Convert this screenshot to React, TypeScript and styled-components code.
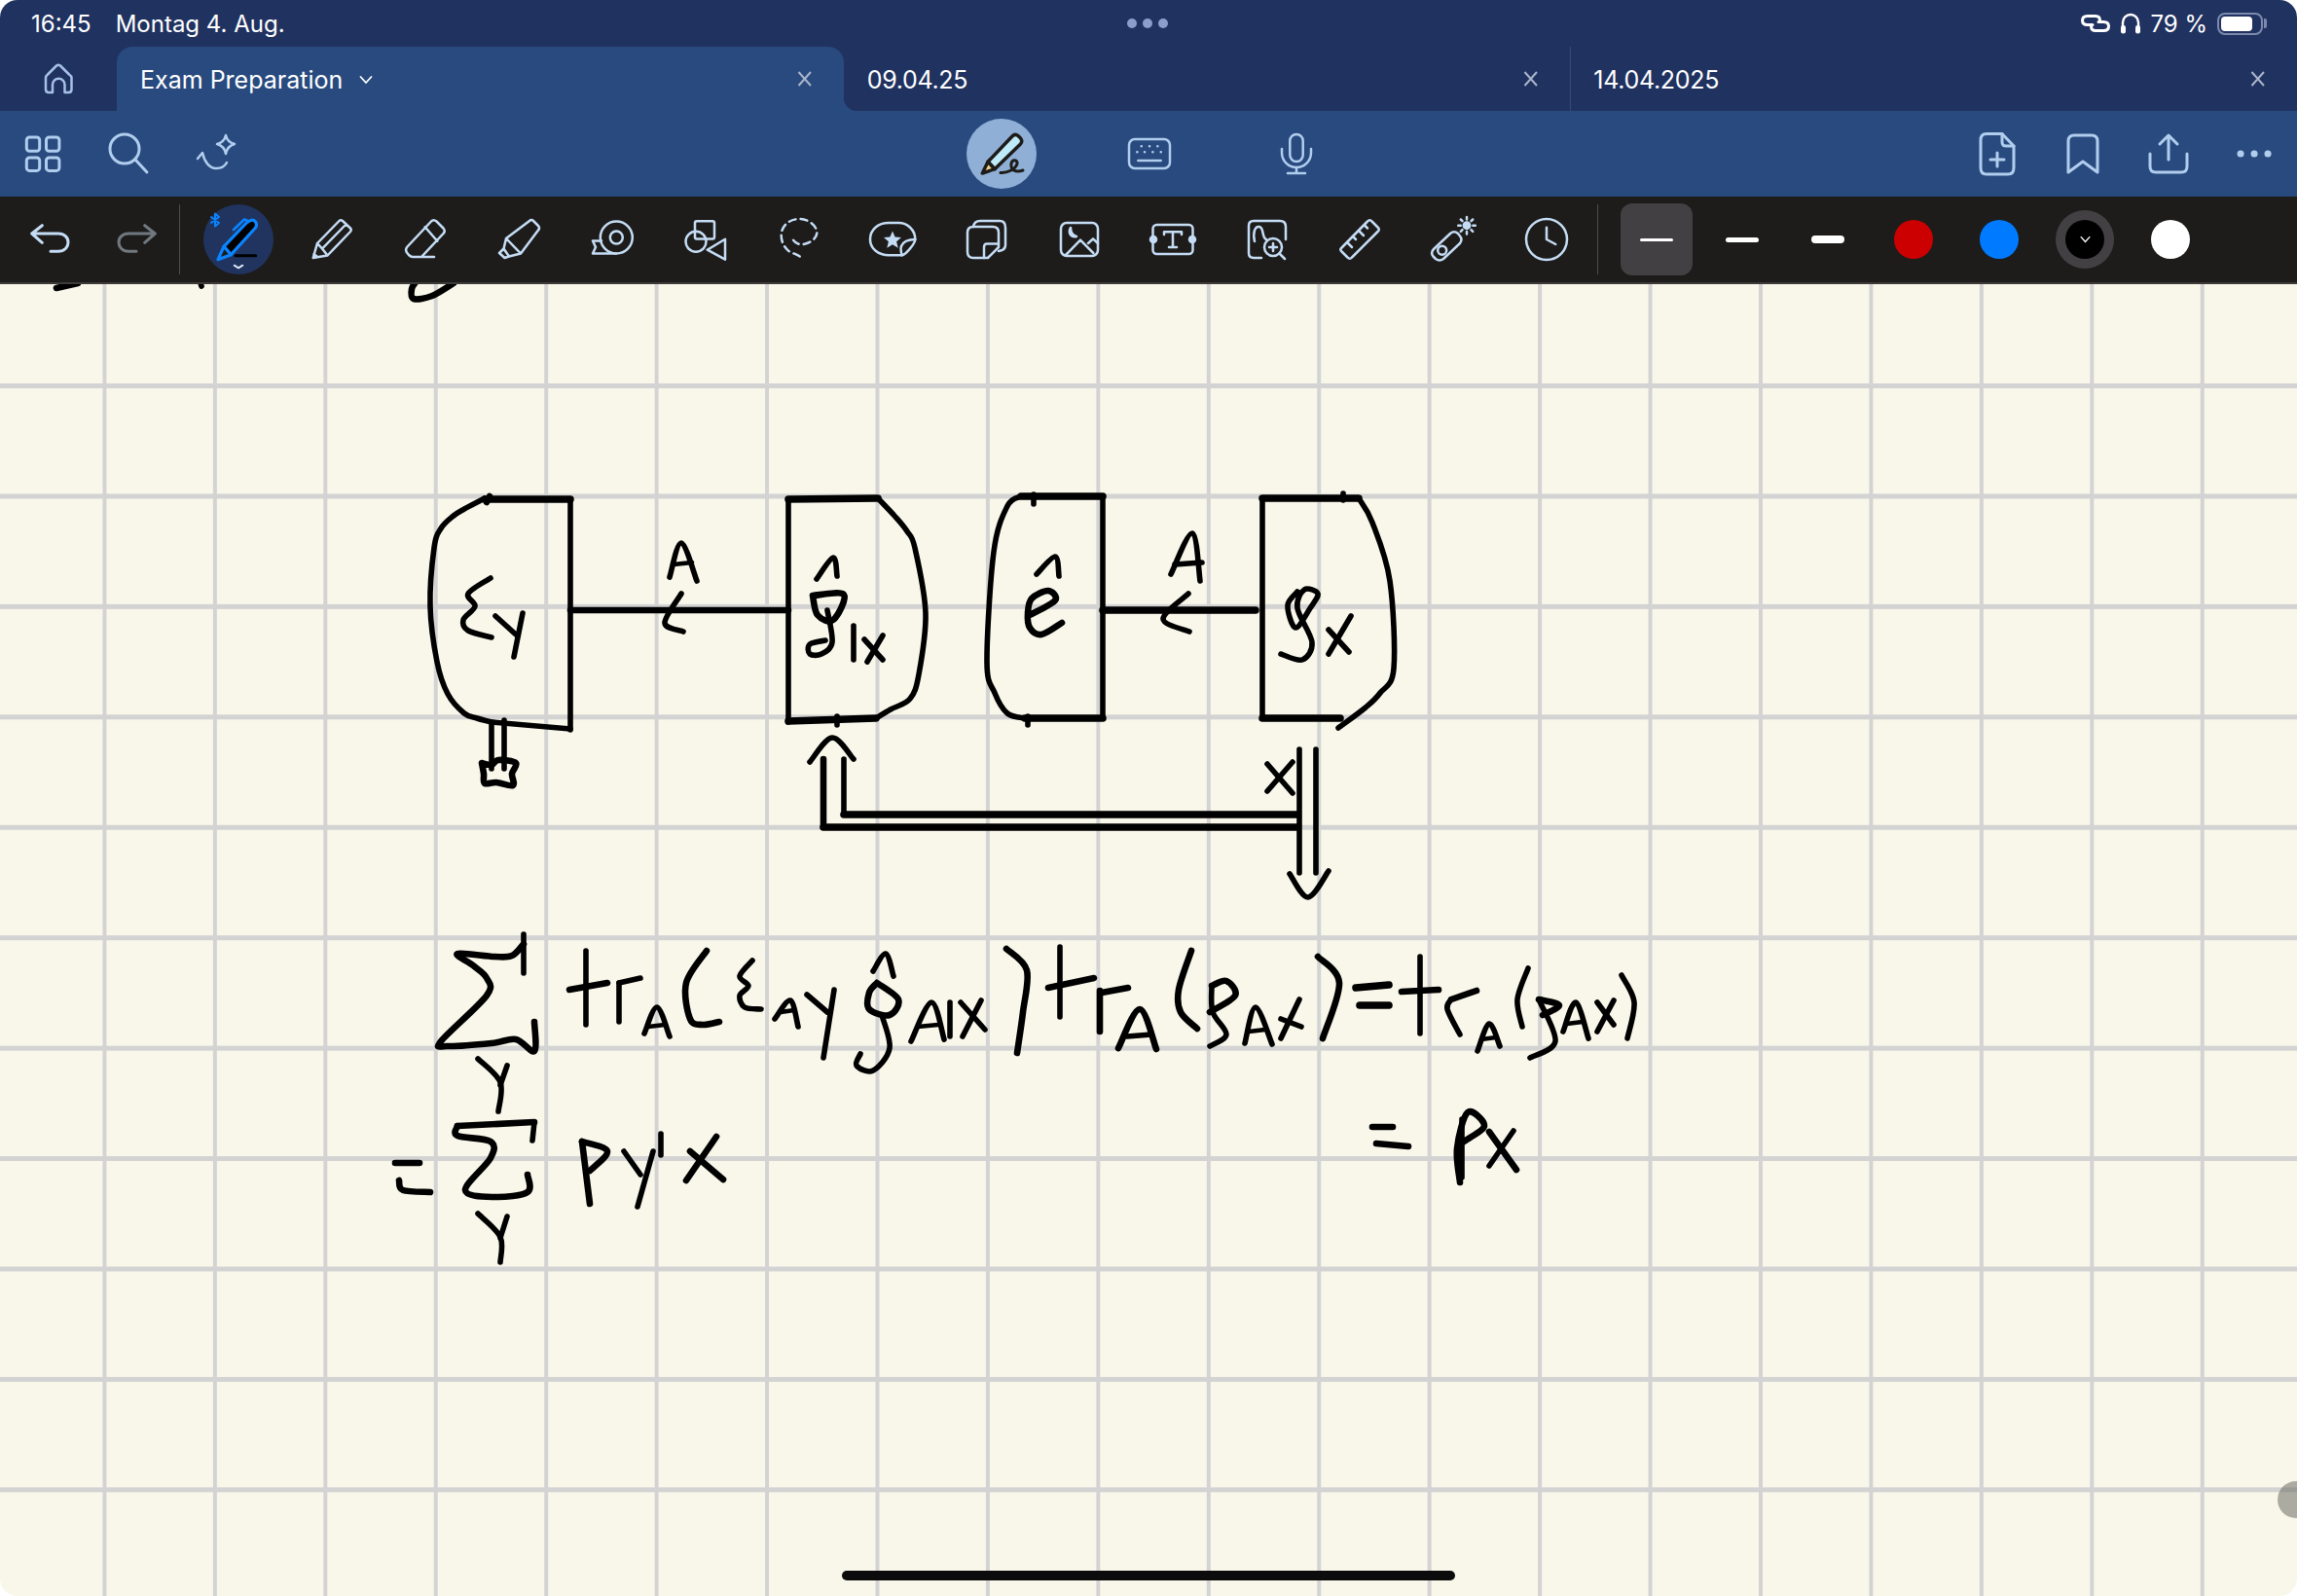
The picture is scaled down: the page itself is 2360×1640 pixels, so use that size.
import React from 'react';
import styled, { createGlobalStyle } from 'styled-components';

const GlobalStyle = createGlobalStyle`
  html, body {
    margin: 0;
    padding: 0;
    background: #fff;
    font-family: Inter, "Liberation Sans", sans-serif;
  }
`;

const Screen = styled.div`
  position: relative;
  display: flex;
  flex-direction: column;
  width: 2360px;
  height: 1640px;
  overflow: hidden;
  border-radius: 18px;
`;

const StatusBar = styled.div`
  display: flex;
  align-items: center;
  justify-content: space-between;
  height: 48px;
  padding: 0 35px 0 32px;
  background: #203260;
  color: #fff;
  font-size: 24px;
`;

const StatusGroup = styled.div`
  display: flex;
  align-items: center;
  flex: 1;
  justify-content: ${(p: { $end?: boolean }) => (p.$end ? 'flex-end' : 'flex-start')};
`;

const DateText = styled.span`
  margin-left: 25px;
`;

const Dots = styled.div`
  display: flex;
  gap: 6px;
`;

const Dot = styled.span`
  width: 10px;
  height: 10px;
  border-radius: 50%;
  background: #8e9ecb;
`;

const Battery = styled.div`
  position: relative;
  box-sizing: border-box;
  width: 47px;
  height: 23px;
  margin-left: 10px;
  padding: 2px 1.5px;
  border: 2px solid #7b89ad;
  border-radius: 8px;

  &::before {
    content: '';
    display: block;
    width: 80%;
    height: 100%;
    background: #fff;
    border-radius: 4px;
  }

  &::after {
    content: '';
    position: absolute;
    top: 4.5px;
    right: -6px;
    width: 3px;
    height: 10px;
    background: #7b89ad;
    border-radius: 0 2px 2px 0;
  }
`;

const Percent = styled.span`
  margin-left: 9px;
`;

const StatusGap = styled.span`
  width: 7px;
`;

const TabRow = styled.div`
  display: flex;
  height: 66px;
  background: #203260;
`;

const HomeSlot = styled.div`
  display: flex;
  align-items: center;
  justify-content: center;
  width: 120px;
  color: #a6c1e6;
`;

const Tab = styled.div<{ $active?: boolean; $divider?: boolean }>`
  position: relative;
  display: flex;
  flex: 1;
  align-items: center;
  padding: 2px 30px 0 24px;
  color: #fff;
  font-size: 25px;
  background: ${(p) => (p.$active ? '#284a7e' : 'transparent')};
  border-radius: ${(p) => (p.$active ? '16px 16px 0 0' : '0')};
  box-shadow: ${(p) => (p.$divider ? 'inset 1px 0 0 #2f4d80' : 'none')};

  &::after {
    content: '';
    display: ${(p) => (p.$active ? 'block' : 'none')};
    position: absolute;
    right: -14px;
    bottom: 0;
    width: 14px;
    height: 14px;
    background: radial-gradient(circle at 100% 0, transparent 14px, #284a7e 14.5px);
  }
`;

const TabTitle = styled.span<{ $digits?: boolean }>`
  flex: 1;
  display: flex;
  align-items: center;
  gap: 16px;
  letter-spacing: ${(p) => (p.$digits ? '-0.3px' : '0')};
`;

const TabClose = styled.svg`
  width: 20px;
  height: 20px;
  margin-top: -2px;
  color: #aab4cb;
`;

const TopBar = styled.div`
  position: relative;
  display: flex;
  align-items: center;
  justify-content: space-between;
  height: 88px;
  background: #284a7e;
  color: #b1cdee;
`;

const BarGroup = styled.div`
  display: flex;
  align-items: center;
`;

const CenterGroup = styled(BarGroup)`
  position: absolute;
  left: 993px;
  top: 8px;
`;

const BarSlot = styled.div<{ $w?: number; $gap?: number }>`
  display: flex;
  align-items: center;
  justify-content: center;
  width: ${(p) => p.$w ?? 88}px;
  height: 72px;
  margin-left: ${(p) => p.$gap ?? 0}px;
`;

const InkButton = styled.div`
  display: flex;
  align-items: center;
  justify-content: center;
  width: 72px;
  height: 72px;
  border-radius: 50%;
  background: #8fafd6;
`;

const ToolBar = styled.div`
  display: flex;
  align-items: center;
  height: 88px;
  padding-left: 8px;
  background: #1d1c1a;
  border-bottom: 2px solid #3c3b39;
  color: #c5dcf5;
`;

const ToolSlot = styled.div<{ $w?: number; $muted?: boolean }>`
  display: flex;
  align-items: center;
  justify-content: center;
  flex: none;
  width: ${(p) => p.$w ?? 96}px;
  height: 72px;
  color: ${(p) => (p.$muted ? '#707880' : 'inherit')};
`;

const ToolDivider = styled.div<{ $l: number; $r: number }>`
  flex: none;
  width: 1px;
  height: 72px;
  margin: 0 ${(p) => p.$r}px 0 ${(p) => p.$l}px;
  background: #4d4d4c;
`;

const ActivePen = styled.div`
  display: flex;
  width: 72px;
  height: 72px;
  border-radius: 50%;
  background: #20345f;
`;

const WidthBox = styled.div<{ $selected?: boolean }>`
  display: flex;
  align-items: center;
  justify-content: center;
  width: 74px;
  height: 74px;
  border-radius: 12px;
  background: ${(p) => (p.$selected ? '#424043' : 'transparent')};
`;

const WidthLine = styled.span<{ $h: number }>`
  display: block;
  width: 34px;
  height: ${(p) => p.$h}px;
  border-radius: ${(p) => p.$h / 2}px;
  background: #fff;
`;

const Swatch = styled.span<{ $color: string }>`
  display: block;
  width: 40px;
  height: 40px;
  border-radius: 50%;
  background: ${(p) => p.$color};
`;

const SwatchRing = styled.div`
  display: flex;
  align-items: center;
  justify-content: center;
  width: 60px;
  height: 60px;
  border-radius: 50%;
  background: #424043;
`;

const BlackSwatch = styled(Swatch)`
  display: flex;
  align-items: center;
  justify-content: center;
  color: #fff;
`;

const Canvas = styled.div`
  position: relative;
  flex: 1;
  background-color: #f9f7ea;
  background-image: linear-gradient(to right, #d3d3d3 4px, transparent 4px),
    linear-gradient(to bottom, #d3d3d3 5px, transparent 5px);
  background-size: 113.45px 113.45px;
  background-position: -8px 102px;
`;

const InkLayer = styled.svg`
  display: block;
  width: 2360px;
  height: 1348px;
`;

const InkStroke = styled.path`
  fill: none;
  stroke: #000;
  stroke-linecap: round;
  stroke-linejoin: round;
`;

const ScrollHandle = styled.div`
  position: absolute;
  right: -18px;
  bottom: 80px;
  width: 38px;
  height: 38px;
  border-radius: 50%;
  background: rgba(110, 110, 100, 0.55);
`;

const HomeIndicator = styled.div`
  position: absolute;
  left: 865px;
  bottom: 16px;
  width: 630px;
  height: 10px;
  border-radius: 5px;
  background: #0c0c0c;
`;

const Glyph = styled.svg.attrs({ viewBox: '0 0 48 48' })<{ $w?: number }>`
  display: block;
  width: 48px;
  height: 48px;
  fill: none;
  stroke: currentColor;
  stroke-width: ${(p) => p.$w ?? 2.5};
  stroke-linecap: round;
  stroke-linejoin: round;
  overflow: visible;
`;

const icons: Record<string, React.ReactNode> = {
  home: <path d="M18 38H14Q11 38 11 35V23Q11 21 13 19.5L22 10.5Q24 9 26 10.5L35 19.5Q37.5 21 37.5 23V35Q37.5 38 34.5 38H30.5V30A6.2 6.2 0 0 0 18 30Z" />,
  grid: (
    <>
      <rect x="7.3" y="7" width="13.4" height="14.3" rx="3" />
      <rect x="27.5" y="7" width="13.4" height="14.3" rx="3" />
      <rect x="7.3" y="28" width="13.4" height="13.4" rx="3" />
      <rect x="27.5" y="28" width="13.4" height="13.4" rx="3" />
    </>
  ),
  search: (
    <>
      <circle cx="22" cy="19" r="15" />
      <path d="M33 30L45 43" />
    </>
  ),
  sparkle: (
    <>
      <path d="M35 5Q36.5 12 44 14Q36.5 16 35 24Q33.5 16 26 14Q33.5 12 35 5Z" />
      <path d="M6 29L11 23C13 32 18 39 25 39C30 39 34 37 36 33" />
    </>
  ),
  keyboard: (
    <>
      <rect x="3" y="9" width="42" height="30" rx="6" />
      <path d="M12.3 31H35.7" />
      <path d="M15.7 16.3h.1M24 16.3h.1M32.3 16.3h.1M11.3 22.3h.1M19 22.3h.1M27.3 22.3h.1M35.7 22.3h.1" />
    </>
  ),
  mic: (
    <>
      <rect x="17.3" y="4" width="13.4" height="28" rx="6.7" />
      <path d="M9 19V23A15 15 0 0 0 39 23V19" />
      <path d="M24 38V44M15 44H33" />
    </>
  ),
  newdoc: (
    <>
      <path d="M29 3.5H13Q7 3.5 7 10V38.5Q7 45 13 45H35Q41 45 41 38.5V16Z" />
      <path d="M29 3.5V12Q29 16 33 16H41" />
      <path d="M24 23V37M17 30H31" strokeWidth="3" />
    </>
  ),
  bookmark: <path d="M9 43V11Q9 5 15 5H33Q39 5 39 11V43L24 32Z" />,
  share: (
    <>
      <path d="M5 24V37Q5 43 11 43H37Q43 43 43 37V24" />
      <path d="M24 30V5M15 14L24 5L33 14" />
    </>
  ),
  undo: <path d="M15.3 9.7L4.7 18L15.3 27.3M4.7 18H32C38 18 42 22 42 27C42 32 38 36.3 32 36.3H24" />,
  redo: <path d="M32.7 9.7L43.3 18L32.7 27.3M43.3 18H16C10 18 6 22 6 27C6 32 10 36.3 16 36.3H24" />,
  pencil: <path d="M4.7 43L9 28L31.5 5Q33 3.5 35 5L43 12.5Q44.5 14 43 16L19.5 40.5ZM14 33.5L38 9M9 28L14 33.5L19.5 40.5M5.5 39L9 42" />,
  eraser: <path d="M30 5.5Q32.5 3 35.5 5.5L42.5 12.5Q45 15.5 42.5 18L20 42H11Q9 42 7 40L5 37.5Q3 34.5 5.5 31.5ZM23.7 11.3L36.3 25.7M20 42H33" />,
  marker: <path d="M35 5Q37 3 39 5L44 10Q46 12.5 44 14.5L26 38.5L14 41.5L8.5 33.5L11 23ZM11 23L26 38.5M8.5 33.5L4 38L9.5 43L14 41.5" />,
  tape: (
    <>
      <circle cx="28.3" cy="22" r="16.5" />
      <circle cx="28.3" cy="22" r="6.5" />
      <path d="M28 38.5H4L7 32L4 25.5H13" />
    </>
  ),
  shapes: (
    <>
      <rect x="13" y="5.3" width="20" height="18.3" rx="2" />
      <circle cx="14" cy="26.3" r="10.5" />
      <path d="M44 23.7V44.7L25.7 34.7Z" />
    </>
  ),
  lasso: <path strokeDasharray="7 5" d="M18 24.7C20 28 24 29.5 28 29C36 28 43 22 42.3 16.3C41 8 32 3 24.7 3C14 3 5.7 10 5.7 19.7C5.7 27 9 32 13 35.7C18 39 25 40 28 44.7" />,
  sticker: (
    <>
      <path d="M33.7 40.3H20.3C9 40.3 1 33 1 24C1 14 9 7 20.3 7H30.3C39 7 47.3 14 47.3 24C47 29 37 40 33.7 40.3Z" />
      <path d="M47.3 24C41 24 35 26 33 31C32 34 33 38 33.7 40.3" />
      <path fill="currentColor" stroke="none" d="M24 15.5L26.6 21.6L33 22.1L28.1 26.3L29.7 32.7L24 29.2L18.3 32.7L19.9 26.3L15 22.1L21.4 21.6Z" />
    </>
  ),
  copy: (
    <>
      <path d="M5 17Q5 11 11 11H31Q37 11 37 17V32L26 43H11Q5 43 5 37Z" />
      <path d="M37 28.5H25Q22 28.5 22 32V43" />
      <path d="M11 11Q12 5 18 5H38Q44 5 44 12V30Q44 35 37 36" />
    </>
  ),
  image: (
    <>
      <rect x="5" y="7" width="38" height="34" rx="6" />
      <path d="M15 12C12 17 15 22 21 21C17 20 15 17 15 12Z" />
      <path d="M10 40L25 24.7L38.3 38M33 28L38 23.3L43 28" />
    </>
  ),
  text: (
    <>
      <rect x="3.5" y="9" width="41" height="30" rx="4" />
      <circle cx="4" cy="24" r="3" fill="currentColor" />
      <circle cx="44" cy="24" r="3" fill="currentColor" />
      <path d="M15 19V16.3H33V19M24 16.3V32M20 32H28" />
    </>
  ),
  docZoom: (
    <>
      <path d="M19 43H11Q6 43 6 38V10Q6 5 11 5H38Q44 5 44 11V24" />
      <path d="M12 26C10 18 12 10 17 11C22 12 19 22 24 24" />
      <circle cx="31" cy="32" r="9" />
      <path d="M37.5 38.5L43 44M31 28V36M27 32H35" />
    </>
  ),
  ruler: (
    <>
      <path d="M32 5.5Q34.3 3 36.5 5.5L42.5 11.5Q45 13.7 42.5 16L16 42.5Q13.7 45 11.5 42.5L5.5 36.5Q3 34.7 5.5 32.5Z" />
      <path d="M11 27L16 32M17 21L20 24M23 15L28 20M29 9.5L32 12.5" />
    </>
  ),
  laser: (
    <>
      <path d="M21 18Q25 14.5 29 18L31 20.5Q34 24 31 28L14 44Q10 47 6 44L3.5 41.5Q0.5 37.5 4 34Z" />
      <circle cx="12.7" cy="35.2" r="4.5" />
      <circle cx="38" cy="9.7" r="3.2" fill="currentColor" />
      <path d="M38 1V3.5M38 16V18.5M29.2 9.7H31.7M44.3 9.7H46.8M31.8 3.5L33.5 5.2M42.5 14.2L44.2 15.9M31.8 15.9L33.5 14.2M42.5 5.2L44.2 3.5" />
    </>
  ),
  clock: (
    <>
      <circle cx="24" cy="24" r="21" />
      <path d="M24 11.7V24L33.3 29" />
    </>
  ),
  link: (
    <>
      <path d="M20 26H13Q6 26 6 20Q6 14 13 14H24Q30 14 30 20" />
      <path d="M28 22H35Q42 22 42 28Q42 34 35 34H24Q18 34 18 28" />
    </>
  ),
};

const Icon: React.FC<{ name: string; w?: number; size?: number }> = ({ name, w, size }) => (
  <Glyph $w={w} style={size ? { width: size, height: size } : undefined}>
    {icons[name]}
  </Glyph>
);

const Headphones = () => (
  <svg width="22" height="24" viewBox="0 0 22 24">
    <path d="M3 16V11A8 8 0 0 1 19 11V16" fill="none" stroke="#fff" strokeWidth="2.4" />
    <rect x="1" y="14" width="5" height="8.5" rx="2.3" fill="#fff" />
    <rect x="16" y="14" width="5" height="8.5" rx="2.3" fill="#fff" />
  </svg>
);

const Chevron: React.FC<{ width?: number; height?: number }> = ({ width = 16, height = 10 }) => (
  <svg width={width} height={height} viewBox="0 0 14 10">
    <path d="M1.5 2L7 8L12.5 2" fill="none" stroke="#fff" strokeWidth="1.8" strokeLinecap="round" />
  </svg>
);

const CloseIcon = () => (
  <TabClose viewBox="0 0 20 20">
    <path d="M3.5 3L16 17M16 3L3.5 17" stroke="currentColor" strokeWidth="2" fill="none" />
  </TabClose>
);

const HandPen = () => (
  <svg width="72" height="72" viewBox="0 0 72 72" fill="none" strokeLinecap="round" strokeLinejoin="round">
    <path d="M22 44.3L47 18Q50 15 53 17.5L55.5 20Q58 23 55.5 26L29 51.7Z" fill="#bfeaf8" stroke="#1d1c1a" strokeWidth="3.5" />
    <path d="M22 44.3L16.3 56L29 51.7Z" fill="#f0d78c" stroke="#1d1c1a" strokeWidth="3.5" />
    <path d="M35 55.5C42 56 50 52 52 46.5C53 42 47 41 46 46C45 52 50 56 58 53" stroke="#1d1c1a" strokeWidth="3" />
  </svg>
);

const StylusPen = () => (
  <svg width="72" height="72" viewBox="0 0 72 72" fill="none" strokeLinecap="round" strokeLinejoin="round">
    <path d="M21 43.3L44.3 19L48.5 16.5Q51.5 15.5 53.5 18Q55.5 21 53.5 24L28.3 51.7Z" fill="#000" stroke="#0a84ff" strokeWidth="3.2" />
    <path d="M21 43.3L15 56.7L28.3 51.7Z" fill="#1d1c1a" stroke="#0a84ff" strokeWidth="3.2" />
    <path d="M31 26L42 15.5L46 17" stroke="#0a84ff" strokeWidth="2.6" />
    <path d="M8 13L16 19L12 22.5V9.5L16 13L8 19" stroke="#0a84ff" strokeWidth="2" />
    <path d="M33 52.7H53.7" stroke="#000" strokeWidth="3" />
    <path d="M31.7 62.7L36 65.3L40.3 62.7" stroke="#dbe6f4" strokeWidth="2" />
  </svg>
);

// ink strokes in page coordinates: [width, x, y, x, y, ...]
const strokes: number[][] = [
  // scraps from the previous page area
  [5, 58, 296, 80, 291],
  [4, 206, 291, 207, 294],
  [5, 466, 291, 444, 304, 425, 307, 423, 297, 427, 290],
  // box E
  [6, 586, 513, 498, 513],
  [4, 586, 513, 586, 750],
  [4, 586, 749, 505, 742],
  [4, 505, 742, 490, 738, 477, 733, 460, 713, 449, 680, 442, 623, 446, 563, 453, 543, 466, 530, 477, 523, 498, 512],
  [5, 503, 510, 500, 516],
  // E_y label
  [4, 504, 594, 481, 610, 488, 623, 476, 637, 481, 648, 505, 655],
  [4, 509, 633, 530, 652],
  [4, 537, 630, 528, 675],
  // connector and A
  [5, 586, 627, 810, 627],
  [4, 688, 593, 700, 558, 716, 597],
  [3, 692, 580, 711, 578],
  [4, 700, 610, 683, 640, 702, 649],
  // box rho
  [6, 810, 513, 902, 512],
  [4, 810, 513, 810, 742],
  [6, 810, 741, 900, 738],
  [4, 902, 512, 919, 530, 932, 546, 940, 563, 951, 630, 944, 693, 935, 718, 915, 729, 900, 738],
  [4, 860, 736, 860, 745],
  [4, 839, 595, 856, 573, 860, 592],
  [5, 835, 612, 867, 611, 856, 637, 840, 632, 835, 612],
  [4, 850, 627, 855, 660, 844, 672, 832, 672, 832, 662, 848, 658],
  [4, 877, 643, 877, 678],
  [4, 888, 657, 907, 678],
  [4, 907, 653, 891, 680],
  // box e
  [6, 1049, 510, 1133, 510],
  [4, 1133, 510, 1133, 738],
  [6, 1053, 738, 1133, 738],
  [4, 1049, 510, 1035, 520, 1021, 567, 1014, 680, 1022, 712, 1035, 733, 1053, 738],
  [4, 1062, 508, 1062, 518],
  [4, 1056, 736, 1056, 745],
  [4, 1065, 590, 1084, 572, 1088, 592],
  [5, 1058, 632, 1084, 617, 1077, 607, 1060, 615, 1056, 630, 1058, 645, 1070, 652, 1091, 640],
  // right connector and A
  [6, 1133, 627, 1290, 627],
  [4, 1203, 590, 1225, 548, 1233, 597],
  [4, 1207, 580, 1235, 578],
  [4, 1221, 610, 1195, 636, 1222, 649],
  // box rho x
  [6, 1297, 512, 1396, 512],
  [4, 1297, 512, 1297, 738],
  [6, 1297, 738, 1377, 738],
  [4, 1396, 512, 1410, 537, 1428, 597, 1432, 687, 1418, 712, 1403, 727, 1375, 748],
  [4, 1380, 507, 1380, 514],
  [4, 1333, 608, 1323, 622, 1331, 645, 1346, 625, 1354, 610, 1340, 606, 1333, 625, 1348, 660, 1338, 678, 1316, 672],
  [4, 1365, 647, 1386, 670],
  [4, 1388, 633, 1365, 672],
  // measurement under E
  [4, 505, 743, 505, 790],
  [4, 518, 740, 518, 790],
  [5, 495, 784, 505, 786, 512, 781, 530, 784, 526, 795, 527, 807, 510, 804, 498, 805, 497, 795, 495, 784],
  // feedback double arrow
  [5, 846, 850, 846, 780],
  [4, 867, 780, 867, 837],
  [4, 832, 783, 855, 758, 877, 780],
  [6, 867, 837, 1333, 837],
  [6, 846, 850, 1333, 850],
  [4, 1335, 770, 1335, 897],
  [4, 1352, 770, 1352, 897],
  [4, 1325, 898, 1344, 922, 1365, 895],
  [4, 1302, 785, 1328, 815],
  [4, 1328, 783, 1302, 813],
  // first equation: sum
  [4, 538, 960, 538, 1000],
  [5, 538, 970, 526, 982, 508, 983, 470, 980, 486, 992, 500, 1005, 500, 1023, 453, 1070, 460, 1075, 505, 1072, 530, 1068, 549, 1080, 549, 1050],
  [4, 491, 1088, 514, 1112, 512, 1142],
  [4, 521, 1095, 514, 1115],
  // tr_A(
  [4, 602, 977, 602, 1053],
  [5, 585, 1017, 624, 1010],
  [4, 636, 1010, 636, 1050],
  [4, 636, 1010, 658, 1005],
  [4, 662, 1062, 675, 1035, 688, 1065],
  [3, 666, 1055, 683, 1053],
  [5, 726, 977, 705, 1010, 709, 1047, 722, 1053, 739, 1050],
  [4, 773, 987, 760, 1003, 769, 1013, 760, 1023, 765, 1035, 782, 1037],
  [4, 796, 1047, 812, 1028, 820, 1055],
  [3, 802, 1040, 816, 1038],
  [4, 829, 1022, 850, 1040],
  [4, 857, 1017, 846, 1087],
  [4, 897, 998, 910, 980, 918, 1003],
  [5, 901, 1010, 923, 1027, 914, 1043, 893, 1037, 893, 1020, 901, 1010],
  [4, 906, 1043, 914, 1077, 897, 1100, 880, 1095, 884, 1083],
  [4, 936, 1070, 957, 1030, 970, 1068],
  [3, 943, 1055, 964, 1053],
  [4, 976, 1030, 976, 1065],
  [4, 987, 1030, 1012, 1058],
  [4, 1008, 1028, 989, 1065],
  [5, 1034, 975, 1055, 997, 1051, 1040, 1045, 1082],
  [4, 1089, 973, 1089, 1045],
  [5, 1077, 1015, 1124, 1005],
  [5, 1130, 1018, 1130, 1060],
  [5, 1132, 1020, 1159, 1015],
  [5, 1149, 1077, 1171, 1037, 1188, 1078],
  [4, 1158, 1065, 1183, 1063],
  [5, 1224, 977, 1211, 1017, 1213, 1040, 1230, 1057],
  [5, 1245, 1013, 1260, 1008, 1269, 1023, 1243, 1040],
  [4, 1245, 1013, 1246, 1040, 1260, 1063, 1243, 1075],
  [4, 1279, 1072, 1290, 1035, 1307, 1073],
  [3, 1283, 1060, 1300, 1058],
  [4, 1316, 1047, 1337, 1055],
  [4, 1335, 1027, 1316, 1067],
  [5, 1354, 983, 1376, 1010, 1359, 1067],
  [6, 1393, 1015, 1427, 1012],
  [6, 1397, 1033, 1427, 1033],
  [4, 1459, 983, 1459, 1062],
  [5, 1440, 1019, 1478, 1017],
  [5, 1491, 1027, 1517, 1018],
  [4, 1491, 1027, 1487, 1037, 1500, 1063],
  [4, 1518, 1080, 1530, 1052, 1541, 1075],
  [3, 1522, 1068, 1537, 1066],
  [4, 1570, 995, 1559, 1027, 1564, 1055],
  [5, 1581, 1027, 1602, 1033, 1585, 1043],
  [4, 1581, 1027, 1598, 1070, 1572, 1087],
  [4, 1606, 1060, 1619, 1030, 1632, 1067],
  [3, 1610, 1052, 1626, 1050],
  [4, 1641, 1030, 1658, 1053],
  [4, 1658, 1028, 1641, 1060],
  [4, 1666, 1002, 1679, 1030, 1672, 1067],
  // second equation
  [5, 406, 1195, 431, 1195],
  [5, 410, 1213, 414, 1223, 442, 1225],
  [5, 470, 1157, 549, 1153],
  [4, 549, 1153, 547, 1172],
  [5, 470, 1157, 470, 1167, 504, 1173, 504, 1190, 478, 1223, 508, 1230, 542, 1225, 542, 1207],
  [4, 491, 1247, 514, 1271, 514, 1297],
  [4, 521, 1250, 514, 1272],
  [5, 598, 1173, 606, 1237],
  [5, 598, 1173, 624, 1183, 606, 1203],
  [4, 641, 1183, 658, 1207],
  [4, 671, 1183, 655, 1240],
  [4, 679, 1165, 679, 1187],
  [5, 709, 1183, 743, 1212],
  [5, 736, 1168, 705, 1213],
  [5, 1410, 1158, 1431, 1158],
  [5, 1414, 1175, 1447, 1178],
  [5, 1500, 1215, 1497, 1180, 1508, 1143, 1525, 1157, 1504, 1173],
  [4, 1502, 1150, 1502, 1210],
  [5, 1530, 1163, 1558, 1202],
  [4, 1555, 1162, 1530, 1198],
];

// Catmull-Rom through the sampled points, so hand strokes bend instead of kink
const strokePath = (pts: number[]) => {
  const p: [number, number][] = [];
  for (let i = 0; i < pts.length; i += 2) p.push([pts[i], pts[i + 1]]);
  if (p.length === 2) return `M${p[0]}L${p[1]}`;
  let d = `M${p[0]}`;
  for (let i = 0; i < p.length - 1; i++) {
    const a = p[Math.max(i - 1, 0)];
    const b = p[i];
    const c = p[i + 1];
    const e = p[Math.min(i + 2, p.length - 1)];
    d += `C${b[0] + (c[0] - a[0]) / 6} ${b[1] + (c[1] - a[1]) / 6} ${c[0] - (e[0] - b[0]) / 6} ${c[1] - (e[1] - b[1]) / 6} ${c[0]} ${c[1]}`;
  }
  return d;
};

const tools = ['pencil', 'eraser', 'marker', 'tape', 'shapes', 'lasso', 'sticker', 'copy', 'image', 'text', 'docZoom', 'ruler', 'laser', 'clock'];

export default function App() {
  return (
    <Screen>
      <GlobalStyle />
      <StatusBar>
        <StatusGroup>
          <span>16:45</span>
          <DateText>Montag 4. Aug.</DateText>
        </StatusGroup>
        <Dots>
          <Dot />
          <Dot />
          <Dot />
        </Dots>
        <StatusGroup $end>
          <Icon name="link" w={4} size={36} />
          <StatusGap />
          <Headphones />
          <Percent>79 %</Percent>
          <Battery />
        </StatusGroup>
      </StatusBar>
      <TabRow>
        <HomeSlot>
          <Icon name="home" />
        </HomeSlot>
        <Tab $active>
          <TabTitle>
            Exam Preparation
            <Chevron />
          </TabTitle>
          <CloseIcon />
        </Tab>
        <Tab>
          <TabTitle $digits>09.04.25</TabTitle>
          <CloseIcon />
        </Tab>
        <Tab $divider>
          <TabTitle $digits>14.04.2025</TabTitle>
          <CloseIcon />
        </Tab>
      </TabRow>
      <TopBar>
        <BarGroup>
          <BarSlot>
            <Icon name="grid" w={3} />
          </BarSlot>
          <BarSlot $w={84}>
            <Icon name="search" w={3} />
          </BarSlot>
          <BarSlot $w={98}>
            <Icon name="sparkle" />
          </BarSlot>
        </BarGroup>
        <CenterGroup>
          <InkButton>
            <HandPen />
          </InkButton>
          <BarSlot $w={151} $gap={40}>
            <Icon name="keyboard" />
          </BarSlot>
          <BarSlot $w={151}>
            <Icon name="mic" />
          </BarSlot>
        </CenterGroup>
        <BarGroup>
          <BarSlot>
            <Icon name="newdoc" w={3} />
          </BarSlot>
          <BarSlot>
            <Icon name="bookmark" w={3} />
          </BarSlot>
          <BarSlot>
            <Icon name="share" w={3} />
          </BarSlot>
          <BarSlot>
            <Glyph $w={7}>
              <path d="M10 24h.1M24 24h.1M38 24h.1" />
            </Glyph>
          </BarSlot>
        </BarGroup>
      </TopBar>
      <ToolBar>
        <ToolSlot $w={88}>
          <Icon name="undo" w={3} />
        </ToolSlot>
        <ToolSlot $w={88} $muted>
          <Icon name="redo" w={3} />
        </ToolSlot>
        <ToolDivider $l={0} $r={12} />
        <ToolSlot>
          <ActivePen>
            <StylusPen />
          </ActivePen>
        </ToolSlot>
        {tools.map((name) => (
          <ToolSlot key={name}>
            <Icon name={name} />
          </ToolSlot>
        ))}
        <ToolDivider $l={4} $r={16} />
        <ToolSlot $w={88}>
          <WidthBox $selected>
            <WidthLine $h={3} />
          </WidthBox>
        </ToolSlot>
        <ToolSlot $w={88}>
          <WidthBox>
            <WidthLine $h={5} />
          </WidthBox>
        </ToolSlot>
        <ToolSlot $w={88}>
          <WidthBox>
            <WidthLine $h={8} />
          </WidthBox>
        </ToolSlot>
        <ToolSlot $w={88}>
          <Swatch $color="#cc0000" />
        </ToolSlot>
        <ToolSlot $w={88}>
          <Swatch $color="#007aff" />
        </ToolSlot>
        <ToolSlot $w={88}>
          <SwatchRing>
            <BlackSwatch $color="#000">
              <Chevron width={11} height={8} />
            </BlackSwatch>
          </SwatchRing>
        </ToolSlot>
        <ToolSlot $w={88}>
          <Swatch $color="#fff" />
        </ToolSlot>
      </ToolBar>
      <Canvas>
        <InkLayer viewBox="0 292 2360 1348">
          {strokes.map(([w, ...pts], i) => (
            <InkStroke key={i} d={strokePath(pts)} strokeWidth={w + 1.6} />
          ))}
        </InkLayer>
        <ScrollHandle />
        <HomeIndicator />
      </Canvas>
    </Screen>
  );
}
